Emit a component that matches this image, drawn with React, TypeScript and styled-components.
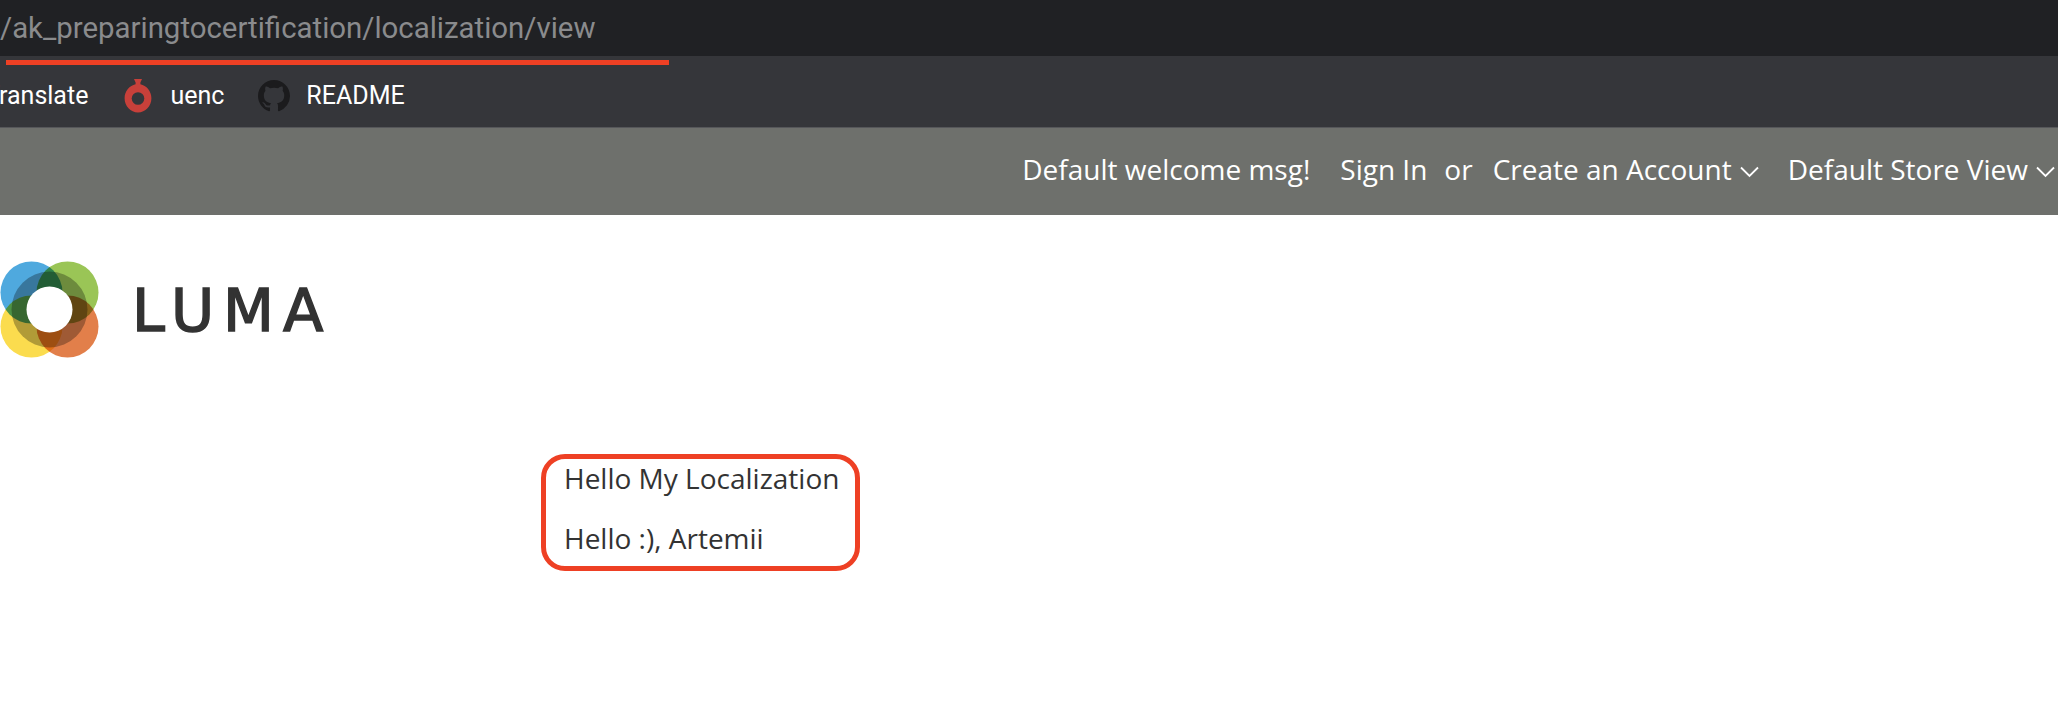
import React from "react";
import styled, { createGlobalStyle } from "styled-components";

const Global = createGlobalStyle`
  html, body { margin: 0; padding: 0; background: #fff; }
  body { width: 2058px; height: 702px; overflow: hidden; }
`;

const Page = styled.div`
  width: 2058px;
  height: 702px;
  overflow: hidden;
  position: relative;
  display: flex;
  flex-direction: column;
`;

const AddressBar = styled.div`
  height: 56px;
  flex: none;
  background: #202124;
  display: flex;
  align-items: center;
  padding-left: 0;
  box-sizing: border-box;
  font: 400 29.4px Roboto, "Liberation Sans", sans-serif;
  color: #8a8b8d;
  white-space: nowrap;
`;

const Underline = styled.div`
  position: absolute;
  left: 6px;
  top: 60px;
  width: 663px;
  height: 5px;
  background: #ee4024;
`;

const Bookmarks = styled.div`
  height: 72px;
  flex: none;
  background: #35363a;
  border-bottom: 1px solid #56575a;
  box-sizing: border-box;
  display: flex;
  align-items: center;
  padding-top: 8px;
  font: 400 25px Roboto, "Liberation Sans", sans-serif;
  color: #fff;
  white-space: nowrap;
`;

const Bookmark = styled.div<{ $gap: number; $inner?: number; $offset?: number }>`
  display: flex;
  align-items: center;
  gap: ${(p) => p.$inner ?? 0}px;
  margin-left: ${(p) => p.$offset ?? 0}px;
  margin-right: ${(p) => p.$gap}px;
`;

const StoreBar = styled.div`
  height: 87px;
  flex: none;
  background: #6e706c;
  display: flex;
  align-items: center;
  justify-content: flex-end;
  padding-right: 3px;
  padding-bottom: 6px;
  box-sizing: border-box;
  font: 400 28px "Open Sans", sans-serif;
  color: #fff;
  white-space: nowrap;
`;

const StoreItem = styled.span<{ $gap: number }>`
  display: inline-flex;
  align-items: center;
  gap: 8px;
  margin-right: ${(p) => p.$gap}px;
`;

const LogoRow = styled.div`
  display: flex;
  align-items: center;
  gap: 32px;
  margin-top: 46px;
  height: 97px;
`;

const Wordmark = styled.span`
  font: 400 59px "DejaVu Sans", Lato, sans-serif;
  letter-spacing: 9px;
  -webkit-text-stroke: 1.5px #333;
  color: #333;
  line-height: 1;
  padding-top: 2px;
`;

const Callout = styled.div`
  align-self: flex-start;
  margin: 96px 0 0 541px;
  width: 319px;
  height: 117px;
  box-sizing: border-box;
  border: 5px solid #ee4024;
  border-radius: 24px;
  padding-left: 18px;
  display: flex;
  flex-direction: column;
  gap: 22px;
  font: 400 28px/38px "Open Sans", sans-serif;
  color: #333;
  white-space: nowrap;
`;

const CalloutLine = styled.div``;

const Chevron = () => (
  <svg width="19" height="12" viewBox="0 0 19 12" fill="none" stroke="#fff" strokeWidth="1.8" style={{ marginTop: 6 }}>
    <path d="M1 1.500 9.500 10 18 1.500" />
  </svg>
);

const Timer = () => (
  <svg width="30" height="34" viewBox="0 0 30 34">
    <path d="M11 0h8l-1.600 3.500 0 1.800c6 1.400 11 6.700 11 14 0 8-6 14.200-13.400 14.200S1.600 27.300 1.600 19.300c0-7.300 5-12.600 11-14V3.500z" fill="#c8403a" />
    <circle cx="15" cy="19.500" r="6.300" fill="#35363a" />
  </svg>
);

const GitHub = () => (
  <svg width="32" height="32" viewBox="0 0 16 16" fill="#1b1b1d">
    <path d="M8 0C3.580 0 0 3.580 0 8c0 3.540 2.290 6.530 5.470 7.590.4.070.55-.17.55-.38 0-.19-.01-.82-.01-1.490-2.010.37-2.530-.49-2.690-.94-.09-.23-.48-.94-.82-1.130-.28-.15-.68-.52-.01-.53.63-.01 1.080.58 1.230.82.720 1.210 1.870.870 2.330.660.070-.520.280-.870.510-1.070-1.780-.200-3.640-.890-3.640-3.950 0-.870.310-1.590.820-2.150-.080-.200-.360-1.020.080-2.120 0 0 .670-.210 2.200.820.640-.180 1.320-.270 2-.270s1.360.090 2 .270c1.530-1.040 2.200-.820 2.200-.820.440 1.100.160 1.920.080 2.120.510.560.820 1.270.820 2.150 0 3.070-1.870 3.750-3.650 3.950.290.250.540.730.540 1.480 0 1.070-.010 1.930-.010 2.200 0 .210.150.460.550.380A8.013 8.013 0 0 0 16 8c0-4.420-3.580-8-8-8z" />
  </svg>
);

const Flower = () => (
  <svg width="100" height="97" viewBox="0 0 100 97" style={{ flex: "none" }}>
    <g style={{ isolation: "isolate" }}>
      <rect width="100" height="97" fill="#fff" />
      <circle cx="31.500" cy="31.500" r="31" fill="#4fa9de" style={{ mixBlendMode: "multiply" }} />
      <circle cx="67.500" cy="31.500" r="31" fill="#9ac556" style={{ mixBlendMode: "multiply" }} />
      <circle cx="31.500" cy="65.500" r="31" fill="#fbdc4e" style={{ mixBlendMode: "multiply" }} />
      <circle cx="67.500" cy="65.500" r="31" fill="#e27f4a" style={{ mixBlendMode: "multiply" }} />
      <circle cx="49.500" cy="48.500" r="38" fill="#b4b4b4" style={{ mixBlendMode: "multiply" }} />
      <circle cx="49.500" cy="48.500" r="23" fill="#fff" />
    </g>
  </svg>
);

export default function App() {
  return (
    <Page>
      <Global />
      <AddressBar>/ak_preparingtocertification/localization/view</AddressBar>
      <Underline />
      <Bookmarks>
        <Bookmark $gap={35} $offset={-15}>Translate</Bookmark>
        <Bookmark $gap={34} $inner={17}>
          <Timer />
          uenc
        </Bookmark>
        <Bookmark $gap={0} $inner={16}>
          <GitHub />
          README
        </Bookmark>
      </Bookmarks>
      <StoreBar>
        <StoreItem $gap={30}>Default welcome msg!</StoreItem>
        <StoreItem $gap={17}>Sign In</StoreItem>
        <StoreItem $gap={20}>or</StoreItem>
        <StoreItem $gap={29}>
          Create an Account
          <Chevron />
        </StoreItem>
        <StoreItem $gap={0}>
          Default Store View
          <Chevron />
        </StoreItem>
      </StoreBar>
      <LogoRow>
        <Flower />
        <Wordmark>LUMA</Wordmark>
      </LogoRow>
      <Callout>
        <CalloutLine>Hello My Localization</CalloutLine>
        <CalloutLine>Hello :), Artemii</CalloutLine>
      </Callout>
    </Page>
  );
}
